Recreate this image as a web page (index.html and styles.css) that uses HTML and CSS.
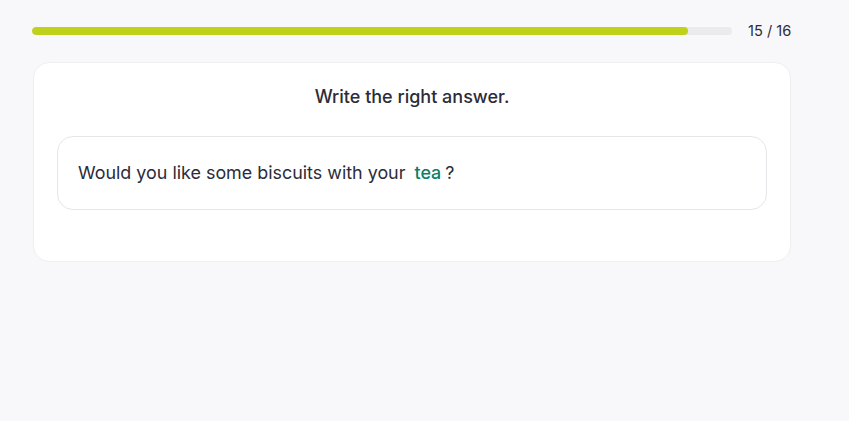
FILE: index.html
```html
<!DOCTYPE html>
<html>
<head>
<meta charset="utf-8">
<link rel="stylesheet" href="styles.css">
</head>
<body>
<div class="page">
  <div class="progress-row">
    <div class="track"><div class="fill" style="width: 93.75%"></div></div>
    <div class="count">15 / 16</div>
  </div>
  <div class="card">
    <div class="title">Write the right answer.</div>
    <div class="question">
      <span>Would you like some biscuits with your</span>
      <span class="answer">tea</span><span class="mark">?</span>
    </div>
  </div>
</div>
</body>
</html>
```

FILE: styles.css
```css
html, body {
  margin: 0;
  padding: 0;
  background: #f8f8fa;
  font-family: Inter, "Noto Sans", sans-serif;
  color: #2c2c38;
}
.page {
  width: 759px;
  padding: 24px 0 0 32px;
}
.progress-row {
  display: flex;
  align-items: center;
  gap: 16px;
  height: 14px;
}
.track {
  flex: 0 0 700px;
  height: 8px;
  border-radius: 4px;
  background: #ebebee;
  overflow: hidden;
}
.fill {
  height: 100%;
  background: #bfd11a;
  border-radius: 4px;
}
.count {
  font-size: 14.6px;
  color: #2c2c38;
  white-space: nowrap;
}
.card {
  margin-top: 24px;
  margin-left: 1px;
  background: #fff;
  border: 1px solid #efeff2;
  border-radius: 16px;
  padding: 22px 23px 51px;
}
.title {
  text-align: center;
  font-size: 18px;
  font-weight: 500;
  line-height: 24px;
  margin-bottom: 27px;
}
.question {
  border: 1px solid #e6e6ea;
  border-radius: 16px;
  padding: 24px 20px;
  font-size: 17.9px;
  line-height: 24px;
}
.answer {
  color: #0b7f68;
  font-weight: 500;
  margin-left: 4px;
}
.mark {
  margin-left: 4px;
}
```
